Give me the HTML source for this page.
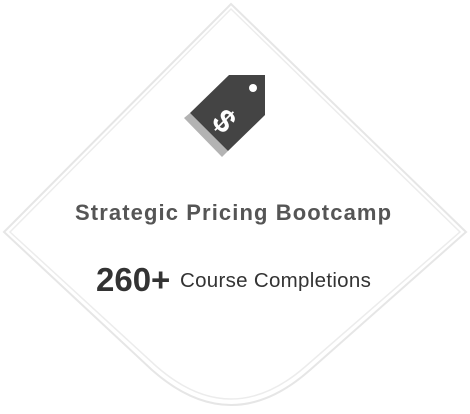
<!DOCTYPE html>
<html><head><style>
body{margin:0;width:470px;height:414px;background:#fff;position:relative;overflow:hidden;font-family:"Liberation Sans",sans-serif}
.t{position:absolute;white-space:nowrap}
</style></head><body>
<svg width="470" height="414" style="position:absolute;left:0;top:0">
<path d="M231,4 L466,232 L310,370 Q231,440 152,370 L4,232 Z" fill="#fff" stroke="#e6e6e6" stroke-width="2"/>
<path d="M231,9 L460,232 L306,366 Q231,432 156,366 L10,232 Z" fill="none" stroke="#ececec" stroke-width="1.5"/>
<polygon points="184,118 190,113 228,151 222,157" fill="#b3b3b3"/>
<polygon points="229,75 265,75 265,115 228,151 190,113" fill="#444"/>
<circle cx="253" cy="88" r="4" fill="#fff"/>
<text x="225" y="132" font-family="Liberation Sans" font-weight="bold" font-size="32" fill="#fff" text-anchor="middle" transform="rotate(45 225 120)">$</text>
</svg>
<div class="t" style="left:75px;top:200px;font-size:22px;font-weight:bold;color:#555;letter-spacing:1.1px">Strategic Pricing Bootcamp</div>
<div class="t" style="left:96px;top:261px;font-size:33px;font-weight:bold;color:#333">260+</div>
<div class="t" style="left:180px;top:269px;font-size:20.5px;color:#333;letter-spacing:0.3px">Course Completions</div>
</body></html>
